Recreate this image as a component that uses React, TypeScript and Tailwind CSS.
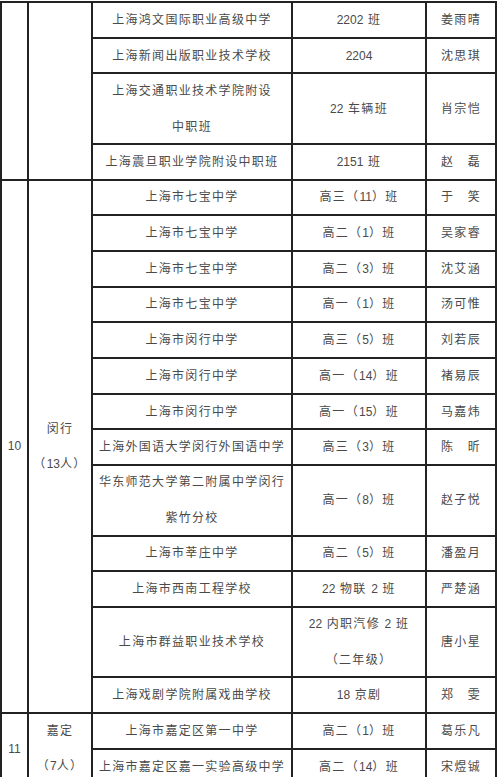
import React from "react";

type Row = {
  school: string[];
  cls: string[];
  name: string;
  tall?: boolean;
};

type Section = {
  num: string;
  district: string[];
  rows: Row[];
};

const SECTIONS: Section[] = [
  {
    num: "",
    district: [],
    rows: [
      { school: ["上海鸿文国际职业高级中学"], cls: ["2202 班"], name: "姜雨晴" },
      { school: ["上海新闻出版职业技术学校"], cls: ["2204"], name: "沈思琪" },
      {
        school: ["上海交通职业技术学院附设", "中职班"],
        cls: ["22 车辆班"],
        name: "肖宗恺",
        tall: true,
      },
      { school: ["上海震旦职业学院附设中职班"], cls: ["2151 班"], name: "赵　磊" },
    ],
  },
  {
    num: "10",
    district: ["闵行", "（13人）"],
    rows: [
      { school: ["上海市七宝中学"], cls: ["高三（11）班"], name: "于　笑" },
      { school: ["上海市七宝中学"], cls: ["高二（1）班"], name: "吴家睿" },
      { school: ["上海市七宝中学"], cls: ["高二（3）班"], name: "沈艾涵" },
      { school: ["上海市七宝中学"], cls: ["高一（1）班"], name: "汤可惟" },
      { school: ["上海市闵行中学"], cls: ["高三（5）班"], name: "刘若辰" },
      { school: ["上海市闵行中学"], cls: ["高一（14）班"], name: "褚易辰" },
      { school: ["上海市闵行中学"], cls: ["高一（15）班"], name: "马嘉炜" },
      { school: ["上海外国语大学闵行外国语中学"], cls: ["高三（3）班"], name: "陈　昕" },
      {
        school: ["华东师范大学第二附属中学闵行", "紫竹分校"],
        cls: ["高一（8）班"],
        name: "赵子悦",
        tall: true,
      },
      { school: ["上海市莘庄中学"], cls: ["高二（5）班"], name: "潘盈月" },
      { school: ["上海市西南工程学校"], cls: ["22 物联 2 班"], name: "严楚涵" },
      {
        school: ["上海市群益职业技术学校"],
        cls: ["22 内职汽修 2 班", "（二年级）"],
        name: "唐小星",
        tall: true,
      },
      { school: ["上海戏剧学院附属戏曲学校"], cls: ["18 京剧"], name: "郑　雯" },
    ],
  },
  {
    num: "11",
    district: ["嘉定", "（7人）"],
    rows: [
      { school: ["上海市嘉定区第一中学"], cls: ["高二（1）班"], name: "葛乐凡" },
      { school: ["上海市嘉定区嘉一实验高级中学"], cls: ["高二（14）班"], name: "宋煜铖" },
    ],
  },
];

// digits keep normal spacing, CJK gets the wide spacing
function Txt({ s }: { s: string }) {
  const parts = s.split(/([0-9]+)/);
  return (
    <>
      {parts.map((p, i) =>
        /^[0-9]+$/.test(p) ? (
          <span key={i} className="tracking-normal">
            {p}
          </span>
        ) : (
          <span key={i}>{p}</span>
        )
      )}
    </>
  );
}

function Lines({ lines, gap = "gap-[16px]" }: { lines: string[]; gap?: string }) {
  return (
    <div className={`flex flex-col items-center ${gap}`}>
      {lines.map((l, i) => (
        <div key={i}>
          <Txt s={l} />
        </div>
      ))}
    </div>
  );
}

const cell = "border-2 border-[#222] p-0 text-center align-middle";

export default function App() {
  return (
    <div className="h-[777px] w-[500px] overflow-hidden bg-white pt-[1px] font-['Liberation_Sans','Noto_Sans_CJK_SC',sans-serif] text-[12px] leading-[20px] tracking-[1.3px] text-[#4a4a4a]">
      <table className="w-[497px] table-fixed border-collapse">
        <colgroup>
          <col className="w-[27px]" />
          <col className="w-[64px]" />
          <col className="w-[200px]" />
          <col className="w-[134px]" />
          <col className="w-[70px]" />
        </colgroup>
        <tbody>
          {SECTIONS.map((sec, si) =>
            sec.rows.map((r, ri) => (
              <tr key={`${si}-${ri}`} className={r.tall ? "h-[70.5px]" : "h-[35.7px]"}>
                {ri === 0 && (
                  <>
                    <td rowSpan={sec.rows.length} className={`${cell} tracking-normal`}>
                      {sec.num}
                    </td>
                    <td rowSpan={sec.rows.length} className={cell}>
                      <Lines lines={sec.district} gap="gap-[15px]" />
                    </td>
                  </>
                )}
                <td className={cell}>
                  <Lines lines={r.school} />
                </td>
                <td className={cell}>
                  <Lines lines={r.cls} />
                </td>
                <td className={cell}>{r.name}</td>
              </tr>
            ))
          )}
        </tbody>
      </table>
    </div>
  );
}
